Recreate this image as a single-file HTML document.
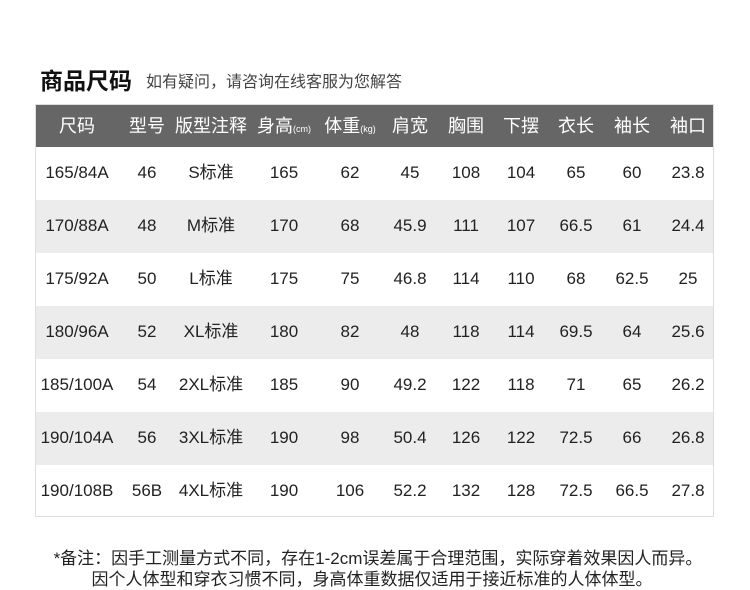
<html><head><style>
body{margin:0;width:750px;height:588px;background:#fff;font-family:"Liberation Sans","Noto Sans CJK SC",sans-serif;position:relative;overflow:hidden;color:#222}
.t{position:absolute;left:40px;top:66px;font-size:23px;line-height:30px;font-weight:bold;color:#111}
.s{position:absolute;left:146px;top:72px;font-size:16px;line-height:22px;color:#444}
.tbl{position:absolute;left:35px;top:104px;width:679px;height:413px;border:1px solid #ddd;box-sizing:border-box}
.row{position:absolute;left:0;width:677px;height:53px}
.row span{position:absolute;transform:translateX(-50%);white-space:nowrap;font-size:17px;line-height:20px;height:20px;top:16px}
.h{background:#666;color:#fff;height:42px;top:0}
.h span{top:11px;font-size:18px}
.h small{font-size:9px}
.g{background:#ececec}
.n{position:absolute;width:750px;text-align:center;font-size:17px;line-height:20px;color:#222}
</style></head><body>
<div class="t">商品尺码</div><div class="s">如有疑问，请咨询在线客服为您解答</div>
<div class="tbl">
<div class="row h"><span style="left:41px">尺码</span><span style="left:111px">型号</span><span style="left:175px">版型注释</span><span style="left:248px">身高<small>(cm)</small></span><span style="left:314px">体重<small>(kg)</small></span><span style="left:374px">肩宽</span><span style="left:430px">胸围</span><span style="left:485px">下摆</span><span style="left:540px">衣长</span><span style="left:596px">袖长</span><span style="left:652px">袖口</span></div>
<div class="row" style="top:42px"><span style="left:41px">165/84A</span><span style="left:111px">46</span><span style="left:175px">S标准</span><span style="left:248px">165</span><span style="left:314px">62</span><span style="left:374px">45</span><span style="left:430px">108</span><span style="left:485px">104</span><span style="left:540px">65</span><span style="left:596px">60</span><span style="left:652px">23.8</span></div>
<div class="row g" style="top:95px"><span style="left:41px">170/88A</span><span style="left:111px">48</span><span style="left:175px">M标准</span><span style="left:248px">170</span><span style="left:314px">68</span><span style="left:374px">45.9</span><span style="left:430px">111</span><span style="left:485px">107</span><span style="left:540px">66.5</span><span style="left:596px">61</span><span style="left:652px">24.4</span></div>
<div class="row" style="top:148px"><span style="left:41px">175/92A</span><span style="left:111px">50</span><span style="left:175px">L标准</span><span style="left:248px">175</span><span style="left:314px">75</span><span style="left:374px">46.8</span><span style="left:430px">114</span><span style="left:485px">110</span><span style="left:540px">68</span><span style="left:596px">62.5</span><span style="left:652px">25</span></div>
<div class="row g" style="top:201px"><span style="left:41px">180/96A</span><span style="left:111px">52</span><span style="left:175px">XL标准</span><span style="left:248px">180</span><span style="left:314px">82</span><span style="left:374px">48</span><span style="left:430px">118</span><span style="left:485px">114</span><span style="left:540px">69.5</span><span style="left:596px">64</span><span style="left:652px">25.6</span></div>
<div class="row" style="top:254px"><span style="left:41px">185/100A</span><span style="left:111px">54</span><span style="left:175px">2XL标准</span><span style="left:248px">185</span><span style="left:314px">90</span><span style="left:374px">49.2</span><span style="left:430px">122</span><span style="left:485px">118</span><span style="left:540px">71</span><span style="left:596px">65</span><span style="left:652px">26.2</span></div>
<div class="row g" style="top:307px"><span style="left:41px">190/104A</span><span style="left:111px">56</span><span style="left:175px">3XL标准</span><span style="left:248px">190</span><span style="left:314px">98</span><span style="left:374px">50.4</span><span style="left:430px">126</span><span style="left:485px">122</span><span style="left:540px">72.5</span><span style="left:596px">66</span><span style="left:652px">26.8</span></div>
<div class="row" style="top:360px"><span style="left:41px">190/108B</span><span style="left:111px">56B</span><span style="left:175px">4XL标准</span><span style="left:248px">190</span><span style="left:314px">106</span><span style="left:374px">52.2</span><span style="left:430px">132</span><span style="left:485px">128</span><span style="left:540px">72.5</span><span style="left:596px">66.5</span><span style="left:652px">27.8</span></div>
</div>
<div class="n" style="top:549px;left:3px">*备注：因手工测量方式不同，存在1-2cm误差属于合理范围，实际穿着效果因人而异。</div>
<div class="n" style="top:570px;left:-3px">因个人体型和穿衣习惯不同，身高体重数据仅适用于接近标准的人体体型。</div>
</body></html>
